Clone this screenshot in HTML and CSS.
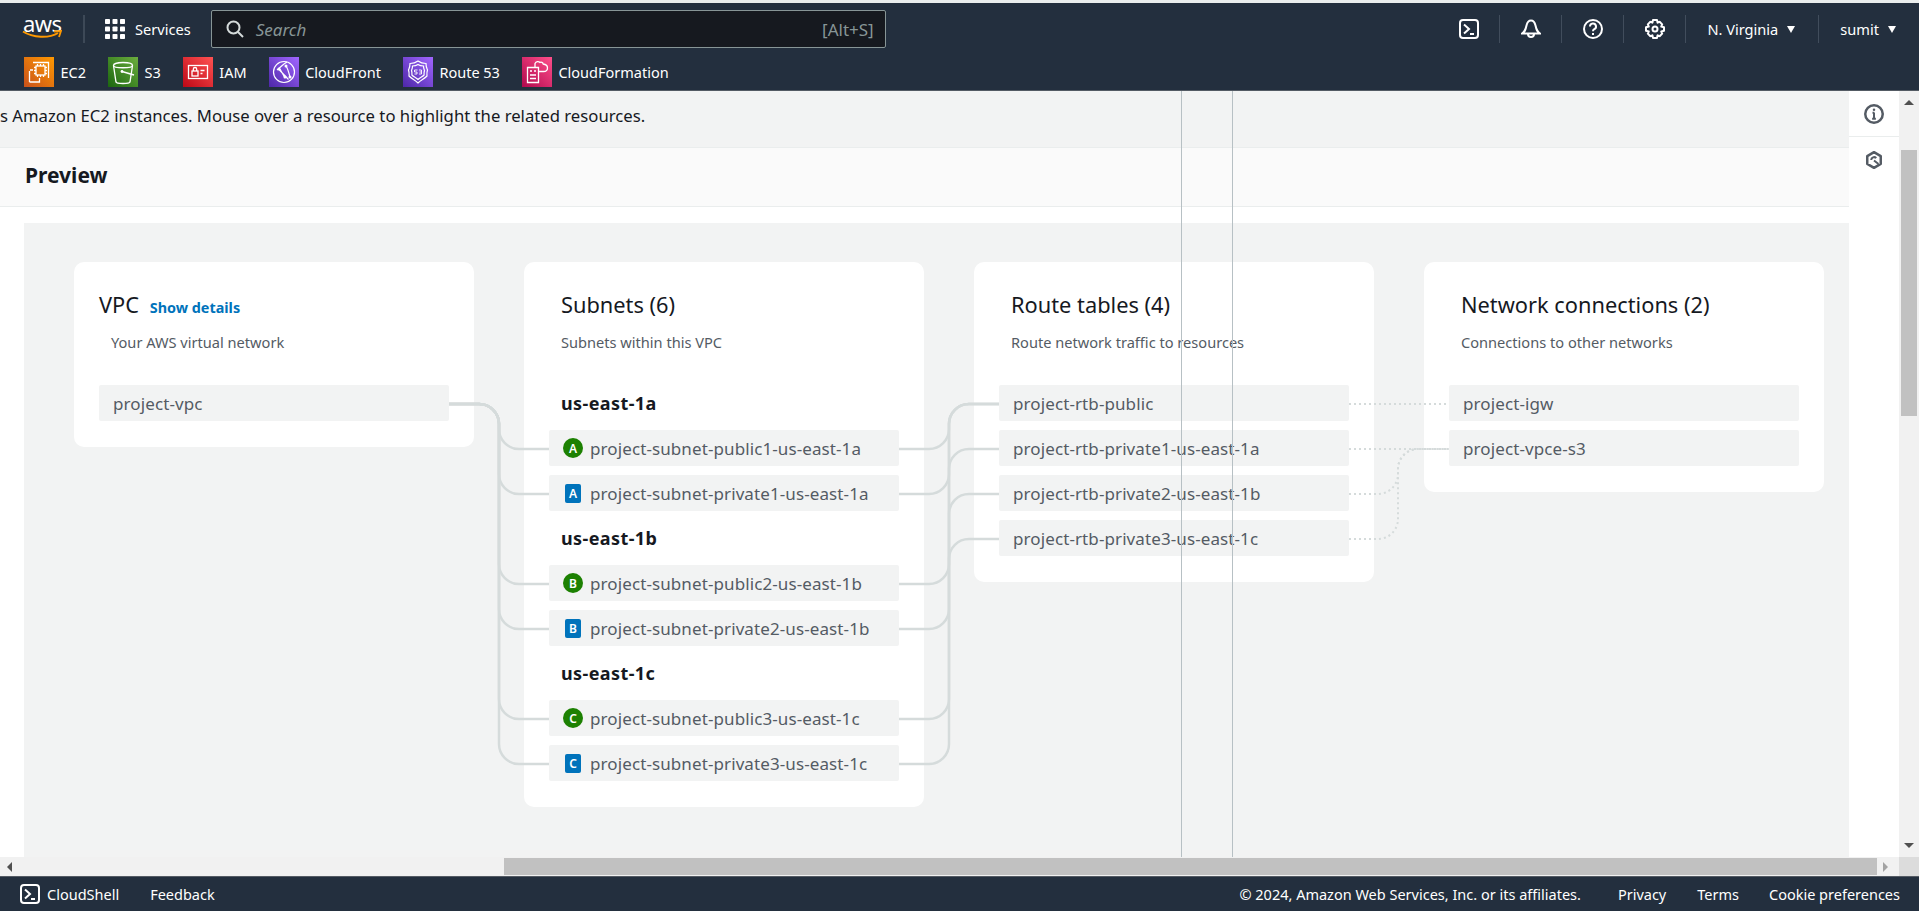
FILE: index.html
```html
<!DOCTYPE html>
<html lang="en">
<head>
<meta charset="utf-8">
<title>Create VPC | VPC Console</title>
<link rel="stylesheet" href="styles.css">
</head>
<body>
<svg class="defs" width="0" height="0" aria-hidden="true">
  <defs>
    <linearGradient id="gOrange" x1="0" y1="1" x2="1" y2="0"><stop offset="0" stop-color="#c8511b"/><stop offset="1" stop-color="#ff9900"/></linearGradient>
    <linearGradient id="gGreen" x1="0" y1="1" x2="1" y2="0"><stop offset="0" stop-color="#1b660f"/><stop offset="1" stop-color="#6cae3e"/></linearGradient>
    <linearGradient id="gRed" x1="0" y1="1" x2="1" y2="0"><stop offset="0" stop-color="#bd0816"/><stop offset="1" stop-color="#ff5252"/></linearGradient>
    <linearGradient id="gPurple" x1="0" y1="1" x2="1" y2="0"><stop offset="0" stop-color="#4d27a8"/><stop offset="1" stop-color="#a166ff"/></linearGradient>
    <linearGradient id="gPink" x1="0" y1="1" x2="1" y2="0"><stop offset="0" stop-color="#b0084d"/><stop offset="1" stop-color="#ff4f8b"/></linearGradient>
  </defs>
</svg>
<div class="app">
  <div class="topstrip"></div>
  <header class="nav">
    <div class="nav-main">
      <div class="logo">
        <span class="logo-text">aws</span>
        <svg class="logo-smile" viewBox="0 0 40 10"><path d="M1 1.500C11 8 27 8.500 36 3" fill="none" stroke="#ff9900" stroke-width="2"/><path d="M32 1.500L39 1L37 7" fill="none" stroke="#ff9900" stroke-width="1.800"/></svg>
      </div>
      <span class="nav-sep"></span>
      <div class="services">
        <svg class="grid-icon" viewBox="0 0 20 20" fill="#fff"><rect width="5" height="5" rx=".8"/><rect x="7.500" width="5" height="5" rx=".8"/><rect x="15" width="5" height="5" rx=".8"/><rect y="7.500" width="5" height="5" rx=".8"/><rect x="7.500" y="7.500" width="5" height="5" rx=".8"/><rect x="15" y="7.500" width="5" height="5" rx=".8"/><rect y="15" width="5" height="5" rx=".8"/><rect x="7.500" y="15" width="5" height="5" rx=".8"/><rect x="15" y="15" width="5" height="5" rx=".8"/></svg>
        <span>Services</span>
      </div>
      <div class="search">
        <svg class="search-icon" viewBox="0 0 18 18" fill="none" stroke="#d5dbdb" stroke-width="2"><circle cx="7.500" cy="7.500" r="6"/><path d="M12 12l5 5"/></svg>
        <span class="search-ph">Search</span>
        <span class="search-key">[Alt+S]</span>
      </div>
      <div class="nav-right">
        <svg class="nav-icon" viewBox="0 0 20 20" fill="none" stroke="#fff" stroke-width="2"><rect x="1" y="1" width="18" height="18" rx="3"/><path d="M5 5.500l5 4.500-5 4.500M11 15h4"/></svg>
        <span class="nav-sep thin"></span>
        <svg class="nav-icon" viewBox="0 0 20 20" fill="none" stroke="#fff" stroke-width="2"><path d="M1 14.500c3-2 3.500-3.500 4.500-8C6.300 3 8 1.500 10 1.500S13.700 3 14.500 6.500c1 4.500 1.500 6 4.500 8z"/><path d="M7 15a3 3 0 0 0 6 0"/></svg>
        <span class="nav-sep thin"></span>
        <svg class="nav-icon" viewBox="0 0 20 20" fill="none" stroke="#fff" stroke-width="2"><circle cx="10" cy="10" r="9"/><path d="M7 7.500A3 3 0 1 1 11 10.300c-.8.400-1 1-1 2"/><path d="M10 14v2"/></svg>
        <span class="nav-sep thin"></span>
        <svg class="nav-icon" viewBox="0 0 20 20" fill="none" stroke="#fff" stroke-width="2"><path d="M8 1h4l.6 2.700 2-.9 2.600 2.600-1 2.200L19 8.200v3.600l-2.800.6 1 2.200-2.600 2.600-2-.9L12 19H8l-.6-2.700-2 .9-2.600-2.600 1-2.200L1 11.800V8.200l2.800-.6-1-2.200 2.600-2.600 2 .9z" stroke-linejoin="round"/><circle cx="10" cy="10" r="2.500"/></svg>
        <span class="nav-sep thin"></span>
        <span class="menu region">N. Virginia<i class="caret"></i></span>
        <span class="nav-sep thin"></span>
        <span class="menu user">sumit<i class="caret"></i></span>
      </div>
    </div>
    <div class="favs">
      <span class="fav">
        <svg class="fav-icon" viewBox="0 0 30 30"><rect width="30" height="30" fill="url(#gOrange)"/><g fill="none" stroke="#fff" stroke-width="1.300"><rect x="12" y="9" width="9" height="9"/><path d="M13.500 9V7M16.500 9V7M19.500 9V7M13.500 20V18M16.500 20V18M19.500 20V18M12 10.500H10M12 13.500H10M12 16.500H10M23 10.500H21M23 13.500H21M23 16.500H21"/><path d="M9 5.500h15.500V21M6 13h3M5.500 25h10V21M5.500 25V14"/></g></svg>
        EC2
      </span>
      <span class="fav">
        <svg class="fav-icon" viewBox="0 0 30 30"><rect width="30" height="30" fill="url(#gGreen)"/><g fill="none" stroke="#fff" stroke-width="1.300"><path d="M5.500 8.500c0-4 19-4 19 0l-2.500 16.500c-.5 2-13.500 2-14 0z"/><path d="M5.500 8.500c0 3 19 3 19 0"/><path d="M14 14.500l12 3.500" stroke-width="1.500"/></g><circle cx="14" cy="14.500" r="1.400" fill="#fff"/></svg>
        S3
      </span>
      <span class="fav">
        <svg class="fav-icon" viewBox="0 0 30 30"><rect width="30" height="30" fill="url(#gRed)"/><g fill="none" stroke="#fff" stroke-width="1.300"><rect x="5.500" y="8.500" width="19" height="13"/><rect x="9" y="14" width="6" height="5"/><path d="M10.300 14v-1.800a1.700 1.700 0 0 1 3.400 0V14M17.500 13.500h4M17.500 16.500h2"/></g></svg>
        IAM
      </span>
      <span class="fav">
        <svg class="fav-icon" viewBox="0 0 30 30"><rect width="30" height="30" fill="url(#gPurple)"/><g fill="none" stroke="#fff" stroke-width="1.200"><circle cx="15" cy="15" r="10.500"/><path d="M8 13c4-3 6-6 10-8M10 12.500l9.500 10M11 12l5 9M17 9c2 3 3 7 4 11"/></g><g fill="#fff"><circle cx="10" cy="12" r="1.500"/><circle cx="17" cy="9" r="1.500"/><circle cx="16" cy="20" r="1.500"/><circle cx="21" cy="20" r="1.500"/></g></svg>
        CloudFront
      </span>
      <span class="fav">
        <svg class="fav-icon" viewBox="0 0 30 30"><rect width="30" height="30" fill="url(#gPurple)"/><g fill="none" stroke="#fff" stroke-width="1.200"><path d="M15 4c2 1.500 5 2.500 8 2.500 0 4 1 5 1.500 6.500-1 3-.5 5-.5 6-3 3-6 4-9 7-3-3-6-4-9-7 0-1 .5-3-.5-6C6 11.500 7 10.500 7 6.500c3 0 6-1 8-2.500z"/><path d="M15 7.500c1.500 1 3.500 1.500 5.500 1.500 0 2.500.7 3.500 1 4.500-.7 2-.4 3.500-.4 4.500-2 2-4 2.500-6.100 4.500-2.100-2-4.100-2.500-6.100-4.500 0-1 .3-2.500-.4-4.500.3-1 1-2 1-4.500 2 0 4-.5 5.500-1.500z"/><path d="M11.500 13h3M11.500 13v2h2.500v2h-2.500M16 13h2.500v4H16M16.500 15h2" stroke-width=".9"/></g></svg>
        Route 53
      </span>
      <span class="fav">
        <svg class="fav-icon" viewBox="0 0 30 30"><rect width="30" height="30" fill="url(#gPink)"/><g fill="none" stroke="#fff" stroke-width="1.300"><path d="M5.500 10.500h11v15h-11zM8 14h2M12 14h2M8 18h6M8 21.500h6"/><path d="M13 10.500V6.500c1-2 3.500-2.500 5-1 1-.8 3 0 3.200 1.500 2.500.3 4.300 2 4.300 4 0 2-1.500 3.500-4 3.500h-4.500"/></g></svg>
        CloudFormation
      </span>
    </div>
  </header>

  <div class="main">
    <div class="content">
      <div class="infobar">s Amazon EC2 instances. Mouse over a resource to highlight the related resources.</div>
      <div class="preview-head">Preview</div>
      <div class="preview-body">
        <div class="canvas">
          <svg class="links" viewBox="24 223 1825 634">
            <g class="solid">
              <path d="M449 404H479a20 20 0 0 1 20 20V429a20 20 0 0 0 20 20H549"/>
              <path d="M449 404H479a20 20 0 0 1 20 20V474a20 20 0 0 0 20 20H549"/>
              <path d="M449 404H479a20 20 0 0 1 20 20V564a20 20 0 0 0 20 20H549"/>
              <path d="M449 404H479a20 20 0 0 1 20 20V609a20 20 0 0 0 20 20H549"/>
              <path d="M449 404H479a20 20 0 0 1 20 20V699a20 20 0 0 0 20 20H549"/>
              <path d="M449 404H479a20 20 0 0 1 20 20V744a20 20 0 0 0 20 20H549"/>
              <path d="M899 449H929a20 20 0 0 0 20-20V424a20 20 0 0 1 20-20H999"/>
              <path d="M899 584H929a20 20 0 0 0 20-20V424a20 20 0 0 1 20-20H999"/>
              <path d="M899 719H929a20 20 0 0 0 20-20V424a20 20 0 0 1 20-20H999"/>
              <path d="M899 494H929a20 20 0 0 0 20-20V469a20 20 0 0 1 20-20H999"/>
              <path d="M899 629H929a20 20 0 0 0 20-20V514a20 20 0 0 1 20-20H999"/>
              <path d="M899 764H929a20 20 0 0 0 20-20V559a20 20 0 0 1 20-20H999"/>
            </g>
            <g class="dotted">
              <path d="M1349 404H1449"/>
              <path d="M1349 449H1449"/>
              <path d="M1349 494H1378a20 20 0 0 0 20-20V469a20 20 0 0 1 20-20H1449"/>
              <path d="M1349 539H1378a20 20 0 0 0 20-20V469a20 20 0 0 1 20-20H1449"/>
            </g>
          </svg>

          <section class="card">
            <div class="card-head vpc-head">
              <h2 class="card-title">VPC <a class="details">Show details</a></h2>
              <p class="card-sub">Your AWS virtual network</p>
            </div>
            <div class="card-list">
              <div class="row">project-vpc</div>
            </div>
          </section>

          <section class="card">
            <div class="card-head">
              <h2 class="card-title">Subnets (6)</h2>
              <p class="card-sub">Subnets within this VPC</p>
            </div>
            <div class="card-list">
              <div class="az">us-east-1a</div>
              <div class="row"><span class="badge pub">A</span>project-subnet-public1-us-east-1a</div>
              <div class="row"><span class="badge priv">A</span>project-subnet-private1-us-east-1a</div>
              <div class="az">us-east-1b</div>
              <div class="row"><span class="badge pub">B</span>project-subnet-public2-us-east-1b</div>
              <div class="row"><span class="badge priv">B</span>project-subnet-private2-us-east-1b</div>
              <div class="az">us-east-1c</div>
              <div class="row"><span class="badge pub">C</span>project-subnet-public3-us-east-1c</div>
              <div class="row"><span class="badge priv">C</span>project-subnet-private3-us-east-1c</div>
            </div>
          </section>

          <section class="card">
            <div class="card-head">
              <h2 class="card-title">Route tables (4)</h2>
              <p class="card-sub">Route network traffic to resources</p>
            </div>
            <div class="card-list">
              <div class="row">project-rtb-public</div>
              <div class="row">project-rtb-private1-us-east-1a</div>
              <div class="row">project-rtb-private2-us-east-1b</div>
              <div class="row">project-rtb-private3-us-east-1c</div>
            </div>
          </section>

          <section class="card">
            <div class="card-head">
              <h2 class="card-title">Network connections (2)</h2>
              <p class="card-sub">Connections to other networks</p>
            </div>
            <div class="card-list">
              <div class="row">project-igw</div>
              <div class="row">project-vpce-s3</div>
            </div>
          </section>
        </div>
      </div>
      <span class="guide guide-a"></span>
      <span class="guide guide-b"></span>
    </div>

    <aside class="tools">
      <div class="tool tool-info">
        <svg viewBox="0 0 16 16" fill="none" stroke="#545b64" stroke-width="2"><circle cx="8" cy="8" r="7"/><path d="M8 7v4.500M6.500 11.800h3M6.800 7h1.500" stroke-width="1.600"/><circle cx="8" cy="4.600" r="1" fill="#545b64" stroke="none"/></svg>
      </div>
      <div class="tool">
        <svg class="tool-hex" viewBox="0 0 16 16" fill="none" stroke="#545b64" stroke-width="2.200"><path d="M8 1l6 3.500v7L8 15l-6-3.500v-7z" stroke-linejoin="round"/><path d="M5.500 8A2.600 2.600 0 0 1 10 6.300M8 8.500l4 3" stroke-width="1.800"/></svg>
      </div>
    </aside>

    <div class="vscroll">
      <i class="arrow up"></i>
      <div class="vtrack"><div class="vthumb"></div></div>
      <i class="arrow down"></i>
    </div>
  </div>

  <div class="hscroll">
    <i class="arrow left"></i>
    <div class="htrack"><div class="hthumb"></div></div>
    <i class="arrow right"></i>
    <span class="corner"></span>
  </div>

  <footer class="footer">
    <svg class="foot-icon" viewBox="0 0 20 20" fill="none" stroke="#fff" stroke-width="2"><rect x="1" y="1" width="18" height="18" rx="3"/><path d="M5 5.500l5 4.500-5 4.500M11 15h4"/></svg>
    <span class="foot-shell">CloudShell</span>
    <span>Feedback</span>
    <span class="foot-copy">© 2024, Amazon Web Services, Inc. or its affiliates.</span>
    <span class="foot-privacy">Privacy</span>
    <span class="foot-terms">Terms</span>
    <span class="foot-cookie">Cookie preferences</span>
  </footer>
</div>
</body>
</html>
```

FILE: styles.css
```css
* { box-sizing: border-box; }
html, body { margin: 0; height: 100%; overflow: hidden; }
body { font-family: "Noto Sans", "Open Sans", sans-serif; color: #16191f; background: #fff; }
.defs { position: absolute; }

.app { display: flex; flex-direction: column; width: 1919px; height: 911px; }
.topstrip { height: 3px; background: #eaeded; flex: none; }

.nav { flex: none; height: 88px; background: #232f3e; border-bottom: 1px solid #545b64; color: #fff; font-size: 14.600px; }
.nav-main { display: flex; align-items: center; height: 50px; padding: 2px 0 0 22px; }
.logo { position: relative; width: 40px; height: 26px; flex: none; }
.logo-text { display: block; font-size: 22px; line-height: 22px; letter-spacing: -.6px; margin-left: 1px; margin-top: -4px; }
.logo-smile { position: absolute; left: 0; top: 14px; width: 40px; height: 10px; }
.nav-sep { width: 2px; height: 28px; background: #3d4957; flex: none; margin-left: 21px; }
.services { display: flex; align-items: center; gap: 10px; margin-left: 20px; }
.grid-icon { width: 20px; height: 20px; flex: none; }
.search { display: flex; align-items: center; width: 675px; height: 38px; margin-left: 20px; padding: 0 11px 0 14px; background: #16191f; border: 1px solid #879596; border-radius: 2px; color: #879596; font-size: 17px; }
.search-icon { width: 18px; height: 18px; flex: none; }
.search-ph { font-style: italic; margin-left: 12px; }
.search-key { margin-left: auto; }
.nav-right { display: flex; align-items: center; margin-left: auto; }
.nav-icon { width: 20px; height: 20px; flex: none; }
.nav-right .nav-sep { width: 1px; margin: 0 21px 0 20px; background: #414d5c; }
.menu { display: flex; align-items: center; white-space: nowrap; }
.caret { width: 0; height: 0; margin-left: 9px; border-left: 4.500px solid transparent; border-right: 4.500px solid transparent; border-top: 7px solid #fff; }
.region { margin-right: 3px; }
.user { margin-right: 23px; }

.favs { display: flex; align-items: flex-start; gap: 22px; height: 37px; padding: 4px 0 0 24px; }
.fav { display: flex; align-items: center; gap: 6.500px; white-space: nowrap; font-size: 14.500px; }
.fav-icon { width: 30px; height: 30px; flex: none; }

.main { flex: none; display: flex; height: 766px; }
.content { position: relative; flex: none; width: 1849px; overflow: hidden; display: flex; flex-direction: column; }
.infobar { flex: none; height: 56px; background: #f2f3f3; font-size: 16.700px; line-height: 50px; color: #16191f; white-space: nowrap; }
.preview-head { flex: none; height: 60px; padding-left: 25px; background: #fafafa; border-top: 1px solid #eaeded; border-bottom: 1px solid #eaeded; font-size: 21px; font-weight: 700; line-height: 54px; }
.preview-body { flex: 1; padding: 16px 0 0 24px; background: #fff; }
.canvas { position: relative; display: flex; align-items: flex-start; gap: 50px; height: 634px; width: 1825px; padding: 39px 50px; background: #f2f3f3; }
.links { position: absolute; left: 0; top: 0; width: 1825px; height: 634px; z-index: 2; pointer-events: none; }
.links path { fill: none; stroke: #d5dbdb; stroke-width: 2.500; }
.links .dotted path { stroke-width: 2; stroke-dasharray: 2 3; }

.card { position: relative; flex: none; width: 400px; padding: 26px 25px; background: #fff; border-radius: 10px; }
.card-head { height: 97px; padding-left: 12px; }
.vpc-head { padding-left: 0; }
.vpc-head .card-sub { padding-left: 12px; }
.card-title { display: flex; align-items: baseline; height: 34px; margin: 0; font-size: 21.800px; font-weight: 400; line-height: 34px; white-space: pre; }
.details { margin-left: 5px; font-size: 14.400px; font-weight: 700; color: #0073bb; }
.card-sub { margin: 9px 0 0; font-size: 14.600px; line-height: 22px; color: #545b64; }
.card-list { display: flex; flex-direction: column; gap: 9px; }
.row { position: relative; z-index: 3; display: flex; align-items: center; height: 36px; padding-left: 14px; background: #f2f3f3; border-radius: 2px; font-size: 17px; letter-spacing: .1px; color: #545b64; white-space: nowrap; }
.az { height: 36px; padding-left: 12px; font-size: 18px; letter-spacing: .4px; font-weight: 700; line-height: 36px; }
.badge { flex: none; display: flex; align-items: center; justify-content: center; width: 20px; height: 20px; margin-right: 7px; color: #fff; font-size: 12px; letter-spacing: 0; font-weight: 600; }
.pub { background: #1d8102; border-radius: 50%; }
.priv { width: 16px; height: 19px; margin: 0 9px 0 2px; background: #0073bb; border-radius: 2px; }

.guide { position: absolute; top: 0; bottom: 0; width: 1px; background: #b7c0c4; z-index: 5; }
.guide-a { left: 1181px; }
.guide-b { left: 1232px; }

.tools { flex: none; width: 50px; background: #fff; }
.tool { display: flex; align-items: center; justify-content: center; height: 46px; }
.tool svg { width: 20px; height: 20px; }
.tool .tool-hex { width: 18px; height: 18px; }
.tool-info { border-bottom: 1px solid #eaeded; }

.vscroll { flex: none; width: 20px; display: flex; flex-direction: column; align-items: center; background: #f1f1f1; }
.vtrack { flex: 1; width: 100%; padding: 39px 2px 0; }
.vthumb { height: 266px; background: #c1c1c1; }
.arrow { flex: none; width: 0; height: 0; }
.up { margin: 9px 0 6px; border-left: 5px solid transparent; border-right: 5px solid transparent; border-bottom: 5px solid #505050; }
.down { margin: 6px 0 9px; border-left: 5px solid transparent; border-right: 5px solid transparent; border-top: 5px solid #505050; }

.hscroll { flex: none; display: flex; align-items: center; height: 19px; background: #f1f1f1; }
.left { margin: 0 7px; border-top: 5px solid transparent; border-bottom: 5px solid transparent; border-right: 5px solid #505050; }
.right { margin: 0 7px 0 6px; border-top: 5px solid transparent; border-bottom: 5px solid transparent; border-left: 5px solid #a3a3a3; }
.htrack { flex: none; width: 1858px; height: 17px; padding-left: 485px; }
.hthumb { height: 100%; background: #c1c1c1; }
.corner { width: 20px; height: 100%; background: #dcdcdc; margin-left: auto; }

.footer { flex: none; display: flex; align-items: center; height: 35px; padding-left: 20px; background: #232f3e; border-top: 1px solid #545b64; color: #fff; font-size: 14.500px; white-space: nowrap; }
.foot-icon { width: 20px; height: 20px; flex: none; margin-right: 7px; }
.foot-shell { margin-right: 31px; }
.foot-copy { margin-left: auto; margin-right: 37px; }
.foot-privacy { margin-right: 31px; }
.foot-terms { margin-right: 30px; }
.foot-cookie { margin-right: 19px; }
```
